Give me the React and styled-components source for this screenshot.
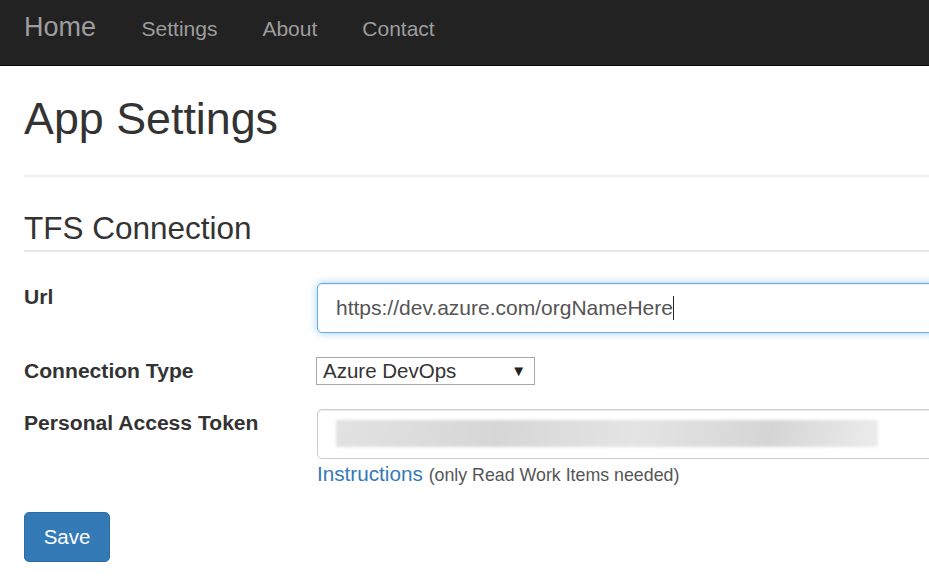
import styled, { createGlobalStyle } from "styled-components";

const GlobalStyle = createGlobalStyle`
	html, body {
		margin: 0;
		padding: 0;
		background: #fff;
		overflow: hidden;
	}
	body {
		font-family: "Liberation Sans", Arial, sans-serif;
		color: #333;
	}
`;

const App = () => {
	return (
		<>
			<GlobalStyle />
			<Navbar>
				<Brand>Home</Brand>
				<NavLink>Settings</NavLink>
				<NavLink>About</NavLink>
				<NavLink>Contact</NavLink>
			</Navbar>
			<Container>
				<PageTitle>App Settings</PageTitle>
				<Divider />
				<SectionTitle>TFS Connection</SectionTitle>
				<Form>
					<Row>
						<Label>Url</Label>
						<TextField focused>
							https://dev.azure.com/orgNameHere
							<Caret />
						</TextField>
					</Row>
					<Row>
						<Label>Connection Type</Label>
						<SelectWrap>
							<Select defaultValue="azure">
								<option value="azure">Azure DevOps</option>
								<option value="tfs">TFS</option>
							</Select>
						</SelectWrap>
					</Row>
					<Row>
						<Label>Personal Access Token</Label>
						<div>
							<TextField>
								<Redacted />
							</TextField>
							<Help>
								<a href="#">Instructions</a> <small>(only Read Work Items needed)</small>
							</Help>
						</div>
					</Row>
				</Form>
				<SaveButton>Save</SaveButton>
			</Container>
		</>
	);
};

const Navbar = styled.nav`
	display: flex;
	align-items: baseline;
	box-sizing: border-box;
	height: 66px;
	padding: 14px 0 0 24px;
	background: #222;
	border-bottom: 1px solid #080808;
`;

const Brand = styled.a`
	font-size: 27px;
	line-height: 1;
	color: #9d9d9d;
	margin-right: 23px;
`;

const NavLink = styled.a`
	font-size: 21px;
	line-height: 1;
	color: #9d9d9d;
	padding: 0 22.5px;
`;

const Container = styled.div`
	width: 1200px;
	padding: 0 24px;
`;

const PageTitle = styled.h1`
	font-size: 44.8px;
	font-weight: 500;
	line-height: 1.1;
	margin: 28px 0 0;
`;

const Divider = styled.hr`
	border: 0;
	border-top: 2px solid #eee;
	margin: 32px 0 0;
`;

const SectionTitle = styled.h3`
	font-size: 31.5px;
	font-weight: 500;
	line-height: 1.1;
	margin: 34px 0 0;
	padding-bottom: 4px;
	border-bottom: 2px solid #e5e5e5;
`;

const Form = styled.div`
	display: flex;
	flex-direction: column;
	gap: 24px;
	margin-top: 31px;
`;

const Row = styled.div`
	display: grid;
	grid-template-columns: 293px 1fr;
	align-items: start;
`;

const Label = styled.label`
	font-size: 21.1px;
	font-weight: 700;
	line-height: 27px;
`;

const TextField = styled.div`
	position: relative;
	display: flex;
	align-items: center;
	box-sizing: border-box;
	height: 50px;
	padding: 0 18px;
	font-size: 21px;
	color: #555;
	background: #fff;
	border: ${p => (p.focused ? "1.5px solid #66afe9" : "1px solid #ccc")};
	border-radius: 5px;
	box-shadow: inset 0 1px 1px rgba(0, 0, 0, 0.075)
		${p => (p.focused ? ", 0 0 8px rgba(102, 175, 233, 0.6)" : "")};
`;

const Caret = styled.span`
	display: inline-block;
	width: 1px;
	height: 24px;
	background: #222;
`;

const Redacted = styled.span`
	display: block;
	width: 542px;
	height: 27px;
	background: linear-gradient(100deg, #e2e2e2 0%, #d6d6d6 30%, #e4e4e4 55%, #d5d5d5 80%, #ececec 100%);
	filter: blur(1.5px);
`;

const SelectWrap = styled.div`
	position: relative;
	width: 219px;
	margin-left: -1px;

	&::after {
		content: "▼";
		position: absolute;
		right: 9px;
		top: 5px;
		font-size: 15px;
		color: #222;
		pointer-events: none;
	}
`;

const Select = styled.select`
	appearance: none;
	width: 100%;
	height: 28px;
	box-sizing: border-box;
	padding: 0 0 0 6px;
	font-family: "Liberation Sans", Arial, sans-serif;
	font-size: 20.5px;
	color: #333;
	background: #fff;
	border: 1px solid #a9a9a9;
	border-radius: 0;
	outline: none;
`;

const Help = styled.div`
	font-size: 21px;
	line-height: 30px;
	color: #737373;

	a {
		color: #337ab7;
		text-decoration: none;
		font-size: 20.7px;
	}
	small {
		font-size: 17.8px;
		color: #555;
	}
`;

const SaveButton = styled.button`
	display: block;
	margin-top: 22px;
	width: 86px;
	height: 50px;
	font-family: "Liberation Sans", Arial, sans-serif;
	font-size: 20.5px;
	color: #fff;
	background: #337ab7;
	border: 1px solid #2e6da4;
	border-radius: 5px;
`;

export default App;
